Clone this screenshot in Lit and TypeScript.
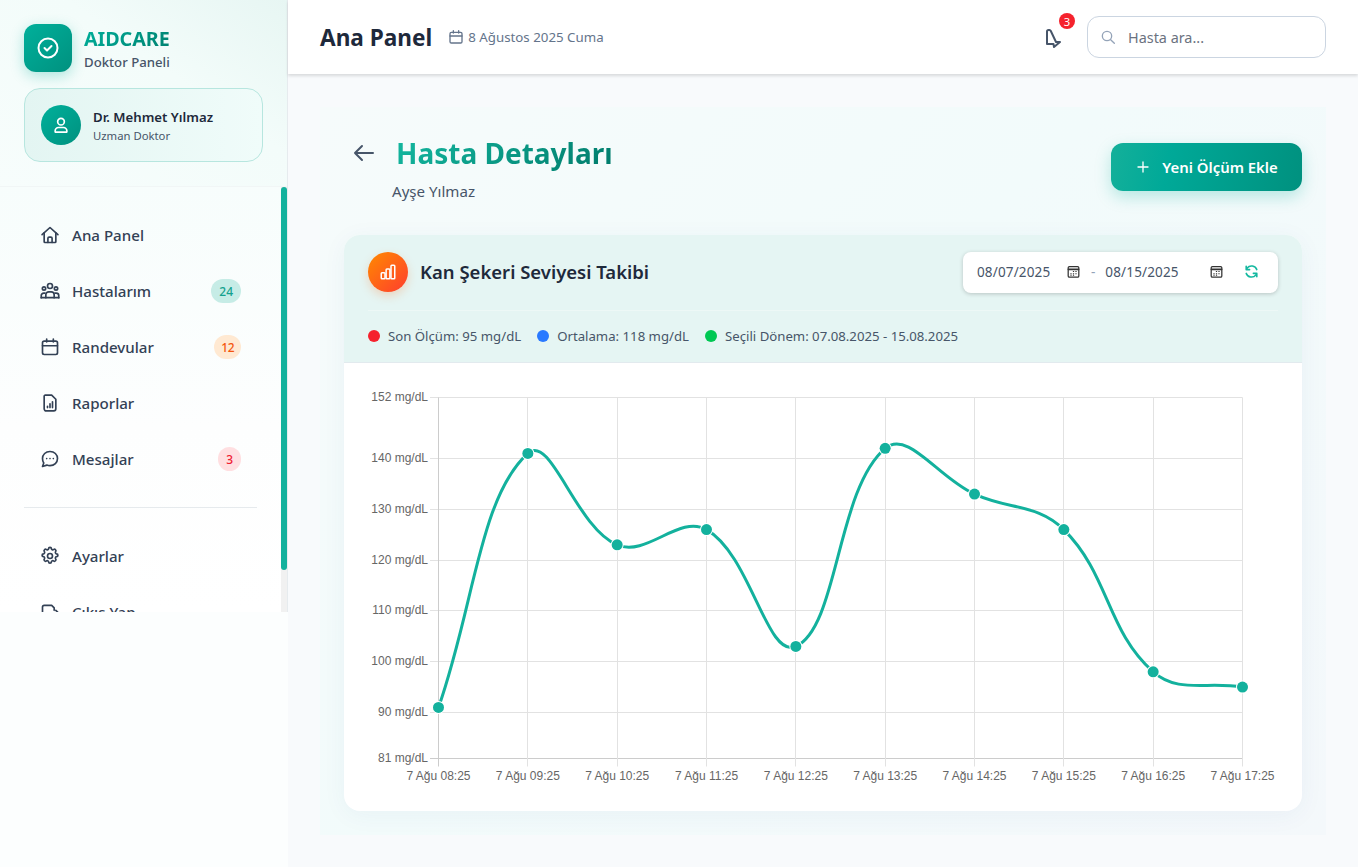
import { LitElement, html, css, svg } from "lit";
import { customElement } from "lit/decorators.js";

const vals = [91, 141, 123, 126, 103, 142, 133, 126, 98, 95];
const labels = ["08:25","09:25","10:25","11:25","12:25","13:25","14:25","15:25","16:25","17:25"];
const L = 94.5, R = 898.5, T = 34.5, B = 395.5; // chart area inside the svg
const xs = vals.map((_, i) => L + (i * (R - L)) / 9);
const yOf = (v: number) => 349.5 - (v - 90) * 5.08;
const ys = vals.map(yOf);

function spline(): string {
  const t = 0.4;
  const pts = xs.map((x, i) => ({ x, y: ys[i] }));
  const cp = pts.map((p, i) => {
    const a = pts[Math.max(0, i - 1)], b = pts[Math.min(pts.length - 1, i + 1)];
    const d1 = Math.hypot(p.x - a.x, p.y - a.y), d2 = Math.hypot(b.x - p.x, b.y - p.y);
    const tot = d1 + d2 || 1;
    const fa = (t * d1) / tot, fb = (t * d2) / tot;
    return {
      px: p.x - fa * (b.x - a.x), py: Math.max(T, Math.min(B, p.y - fa * (b.y - a.y))),
      nx: p.x + fb * (b.x - a.x), ny: Math.max(T, Math.min(B, p.y + fb * (b.y - a.y))),
    };
  });
  let d = `M${pts[0].x} ${pts[0].y}`;
  for (let i = 1; i < pts.length; i++) {
    d += ` C${cp[i - 1].nx.toFixed(2)} ${cp[i - 1].ny.toFixed(2)} ${cp[i].px.toFixed(2)} ${cp[i].py.toFixed(2)} ${pts[i].x.toFixed(2)} ${pts[i].y.toFixed(2)}`;
  }
  return d;
}

const ic = (body: unknown, size = 18, sw = 2) => html`<svg width=${size} height=${size} viewBox="0 0 24 24" fill="none" stroke="currentColor" stroke-width=${sw} stroke-linecap="round" stroke-linejoin="round">${body}</svg>`;

const icons = {
  home: svg`<path d="M2.500 11.500 12 3l9.500 8.500"/><path d="M5 9.500V20a1 1 0 0 0 1 1h12a1 1 0 0 0 1-1V9.500"/><path d="M9.500 21v-5a1.500 1.500 0 0 1 1.500-1.500h2a1.500 1.500 0 0 1 1.500 1.500v5"/>`,
  users: svg`<circle cx="12" cy="6" r="3"/><circle cx="4.800" cy="9" r="2"/><circle cx="19.200" cy="9" r="2"/><path d="M7 20v-3.500a3.500 3.500 0 0 1 3.500-3.500h3a3.500 3.500 0 0 1 3.500 3.500V20"/><path d="M1.500 20v-2.500A3 3 0 0 1 4.500 14.500H6"/><path d="M22.500 20v-2.500a3 3 0 0 0-3-3H18"/><path d="M1.500 20h21"/>`,
  cal: svg`<rect x="3" y="5" width="18" height="16" rx="2"/><path d="M8 2.500V6M16 2.500V6M3 10.500h18"/>`,
  report: svg`<path d="M6 2.500h8l5 5V19a2.500 2.500 0 0 1-2.500 2.500h-9A2.500 2.500 0 0 1 5 19V3.500"/><path d="M9 17.500v-1.500M12 17.500v-4.500M15 17.500v-7"/>`,
  msg: svg`<path d="M12 3c5.200 0 9 3.600 9 8.500S17.200 20 12 20c-1.400 0-2.700-.2-3.800-.7L3 21l1.500-4.200C3.500 15.300 3 13.500 3 11.500 3 6.600 6.800 3 12 3Z"/><path d="M8 11.500h.01M12 11.500h.01M16 11.500h.01"/>`,
  gear: svg`<circle cx="12" cy="12" r="3"/><path d="M10.300 3.300a1.700 1.700 0 0 1 3.400 0 1.700 1.700 0 0 0 2.600 1.100 1.700 1.700 0 0 1 2.400 2.400 1.700 1.700 0 0 0 1.100 2.600 1.700 1.700 0 0 1 0 3.400 1.700 1.700 0 0 0-1.100 2.600 1.700 1.700 0 0 1-2.400 2.400 1.700 1.700 0 0 0-2.600 1.100 1.700 1.700 0 0 1-3.400 0 1.700 1.700 0 0 0-2.600-1.100 1.700 1.700 0 0 1-2.400-2.400 1.700 1.700 0 0 0-1.100-2.600 1.700 1.700 0 0 1 0-3.400 1.700 1.700 0 0 0 1.100-2.600 1.700 1.700 0 0 1 2.400-2.400 1.700 1.700 0 0 0 2.600-1.100Z"/>`,
  logout: svg`<path d="M3 20V6a2 2 0 0 1 2-2h9l3 3v3"/><path d="M3 20h10M14 13h8M19 10l3 3-3 3"/>`,
  nativeCal: svg`<rect x="3.500" y="4" width="17" height="17" rx="2" stroke-width="2"/><path d="M4 8.500h16" stroke-width="3"/><path d="M11 12h2M15 12h2M7 15.500h2M11 15.500h2M15 15.500h2M7 18h2M11 18h2" stroke-width="1.800" stroke-linecap="butt"/>`,
};

@customElement("app-root")
export class AppRoot extends LitElement {
  static styles = css`
    :host { display: block; width: 1358px; height: 867px; overflow: hidden; background: #f8fafc;
      font-family: "Noto Sans", sans-serif; color: #1e293b; }
    .page { display: flex; height: 867px; }
    .side { width: 288px; flex: none; height: 867px; background: #fcfefe; display: flex; flex-direction: column; }
    .side-in { height: 612px; flex: none; display: flex; flex-direction: column; border-right: 1px solid #e6ebee;
      background: linear-gradient(180deg, #f7fdfc 30%, #fdfefe 70%, #ffffff 100%); box-sizing: border-box; }
    .brand-wrap { height: 187px; flex: none; box-sizing: border-box; padding: 24px 24px 0; border-bottom: 1px solid #f1f6f6;
      background: linear-gradient(35deg, #f7fdfc 0%, #f3fcfa 60%, #e7f6f3 100%); }
    .brand { display: flex; gap: 12px; align-items: center; }
    .logo { width: 48px; height: 48px; border-radius: 12px; background: linear-gradient(135deg, #00b09b, #00917f);
      display: flex; align-items: center; justify-content: center; color: #fff; box-shadow: 0 4px 14px rgba(0,176,155,.3); }
    .bt { font-size: 19.800px; font-weight: 700; line-height: 28px; letter-spacing: -.1px;
      background: linear-gradient(135deg, #00b09b, #00806f); -webkit-background-clip: text; background-clip: text; color: transparent; }
    .bs { font-size: 13.200px; font-weight: 500; color: #475569; line-height: 18px; }
    .user { margin-top: 16px; width: 239px; height: 74px; box-sizing: border-box; border: 1px solid #b7e6df; border-radius: 16px;
      background: linear-gradient(90deg, #e3f5f2, #f0fcfa); display: flex; align-items: center; gap: 12px; padding: 0 16px; }
    .avatar { width: 40px; height: 40px; border-radius: 50%; background: linear-gradient(135deg, #00b09b, #00917f); color: #fff;
      display: flex; align-items: center; justify-content: center; }
    .un { font-size: 13.200px; font-weight: 600; color: #1e293b; line-height: 19px; padding-top: 1px; }
    .ur { font-size: 11.300px; color: #475569; line-height: 16px; margin-top: 1px; }
    .nav-wrap { flex: 1; min-height: 0; display: flex; overflow: hidden; }
    .nav { flex: 1; min-width: 0; overflow: hidden; padding: 20px 24px 0 24px; box-sizing: border-box; }
    .track { width: 6px; flex: none; background: #f1f1f1; margin-right: 0; position: relative; }
    .thumb { width: 6px; height: 383px; border-radius: 3px; background: #13b19d; }
    .item { display: flex; align-items: center; height: 56px; padding: 0 16px 0 16px; margin-right: -6px; gap: 12px; color: #334155;
      font-size: 15.100px; font-weight: 500; box-sizing: border-box; width: 233px; }
    .item svg { flex: none; }
    .item .t { flex: 1; }
    .pill { height: 24px; border-radius: 12px; font-size: 12px; font-weight: 500; padding: 0 8px; display: flex; align-items: center; justify-content: center; }
    .p1 { background: #c6ece6; color: #14a18e; }
    .p2 { background: #ffe9d2; color: #f4560e; padding: 0 7px; letter-spacing: -.5px; }
    .p3 { background: #ffdfe1; color: #f01c33; }
    .sep { height: 1px; background: #e6eaed; margin: 20px 0 20px; width: 233px; }
    .main { flex: 1; min-width: 0; display: flex; flex-direction: column; }
    .top { height: 74px; flex: none; background: #fff; box-shadow: 0 2px 3px rgba(0,0,0,.13); display: flex; align-items: center;
      padding: 0 32px; position: relative; box-sizing: border-box; }
    .title { font-size: 22.600px; font-weight: 700; color: #1e293b; letter-spacing: 0; }
    .date { display: flex; align-items: center; gap: 4px; margin-left: 16px; font-size: 13.300px; color: #64748b; }
    .date svg { color: #64748b; }
    .spacer { flex: 1; }
    .bell { position: relative; width: 40px; height: 40px; margin-right: 15px; }
    .bell svg { position: absolute; left: 12px; top: 10px; }
    .dot { position: absolute; left: 27px; top: -4px; width: 16px; height: 16px; border-radius: 50%; background: #f5222d; color: #fff;
      font-size: 11.200px; display: flex; align-items: center; justify-content: center; }
    .search { width: 239px; height: 42px; border: 1px solid #cbd5e1; border-radius: 12px; box-sizing: border-box; display: flex; align-items: center;
      padding-left: 12px; gap: 12px; color: #94a3b8; font-size: 14.400px; background: #fff; }
    .search span { color: #6b7280; }
    .body { flex: 1; min-height: 0; padding: 33px 32px 32px; box-sizing: border-box; }
    .panel { height: 728px; border-radius: 0; box-sizing: border-box; padding: 24px;
      background: linear-gradient(135deg, #f6fbfb 0%, #f2fbfb 45%, #f4f8fb 100%); display: flex; flex-direction: column; }
    .head { display: flex; justify-content: space-between; align-items: flex-start; height: 104px; flex: none; }
    .hl { display: flex; flex-direction: column; padding-top: 2px; }
    .hrow { display: flex; align-items: center; gap: 20px; margin-left: 8px; height: 40px; color: #475569; }
    .h1 { font-size: 28px; font-weight: 700; line-height: 40px;
      background: linear-gradient(135deg, #14b8a0, #007a6a); -webkit-background-clip: text; background-clip: text; color: transparent; }
    .hsub { font-size: 15.100px; color: #475569; margin: 8px 0 0 48px; line-height: 20px; }
    .btn { width: 191px; height: 48px; border-radius: 12px; margin-top: 12px; background: linear-gradient(100deg, #14b09a 0%, #00a998 30%, #00917f 100%);
      color: #fff; font-size: 14.900px; font-weight: 600; display: flex; align-items: center; justify-content: center; gap: 11px;
      box-shadow: 0 6px 16px rgba(0,176,155,.25); }
    .card { flex: 1; min-height: 0; border-radius: 16px; background: #fff; box-shadow: 0 4px 24px rgba(30,70,130,.05); overflow: hidden; display: flex; flex-direction: column; }
    .chead { height: 128px; flex: none; box-sizing: border-box; background: #e5f5f3; border-bottom: 1px solid #e2eaee; padding: 17px 24px 0; }
    .crow { display: flex; justify-content: space-between; align-items: flex-start; height: 58px; border-bottom: 1px solid #edf8f6; }
    .cl { display: flex; align-items: center; gap: 12px; }
    .ci { width: 40px; height: 40px; border-radius: 50%; background: linear-gradient(135deg, #ff8a00, #ff3d2e); color: #fff; display: flex; align-items: center; justify-content: center;
      box-shadow: 0 4px 10px rgba(255,120,40,.25); }
    .ct { font-size: 18.500px; font-weight: 600; color: #1e293b; margin-top: -1px; }
    .dates { width: 315px; height: 41px; border-radius: 8px; background: #fff; box-shadow: 0 1px 4px rgba(0,0,0,.2); display: flex; align-items: center; box-sizing: border-box;
      padding: 0 0 2px 14px; font-size: 13.500px; color: #475569; }
    .d1 { width: 76px; letter-spacing: .15px; }
    .nc { color: #333; display: flex; margin-left: 13px; }
    .nc2 { margin-left: 28px; }
    .dash { color: #94a3b8; margin: 0 10px 0 10px; }
    .rf { color: #14b8a0; display: flex; margin-left: 20px; }
    .legend { display: flex; gap: 16px; font-size: 13.200px; color: #475569; margin-top: 16px; align-items: center; }
    .li { display: flex; align-items: center; gap: 8px; }
    .ld { width: 12px; height: 12px; border-radius: 50%; }
    svg.chart { display: block; flex: none; }
    .tick { font-family: "Liberation Sans", Arial, sans-serif; font-size: 12px; fill: #666; }
  `;

  private nav(icon: unknown, t: string, pill?: string, cls = "") {
    return html`<div class="item">${ic(icon, 20, 2)}<span class="t">${t}</span>${pill ? html`<span class="pill ${cls}">${pill}</span>` : ""}</div>`;
  }

  private chart() {
    const yt: [string, number][] = [["152", 34.5],["140", 95.5],["130", 146.5],["120", 197.5],["110", 247.5],["100", 298.5],["90", 349.5],["81", 395.5]];
    return svg`<svg class="chart" width="958" height="448" viewBox="0 0 958 448">
      ${yt.map(([t, y]) => svg`<line x1="86" x2=${R} y1=${y} y2=${y} stroke=${t === "81" ? "#ccc" : "#e2e2e2"}/>
        <text class="tick" x="84" y=${y - 1} text-anchor="end" dominant-baseline="central">${t} mg/dL</text>`)}
      ${xs.map((x, i) => svg`<line x1=${Math.round(x - .5) + .5} x2=${Math.round(x - .5) + .5} y1=${T} y2=${B + 8} stroke=${i === 0 ? "#ccc" : "#e2e2e2"}/>
        <text class="tick" x=${x} y=${B + 21.5} text-anchor="middle">7 Ağu ${labels[i]}</text>`)}
      <path d=${spline()} fill="none" stroke="#13b19d" stroke-width="3"/>
      ${xs.map((x, i) => svg`<circle cx=${x} cy=${ys[i]} r="5.500" fill="#13b19d" stroke="#fff" stroke-width="2" paint-order="stroke"/>`)}
    </svg>`;
  }

  render() {
    return html`<div class="page">
      <aside class="side"><div class="side-in">
        <div class="brand-wrap">
          <div class="brand">
            <div class="logo">${ic(svg`<circle cx="12" cy="12" r="9.500"/><path d="m8.500 12 2.500 2.500 4.500-4.500"/>`, 24, 2)}</div>
            <div><div class="bt">AIDCARE</div><div class="bs">Doktor Paneli</div></div>
          </div>
          <div class="user">
            <div class="avatar">${ic(svg`<circle cx="12" cy="8" r="4"/><path d="M5 20.500v-1.500a4 4 0 0 1 4-4h6a4 4 0 0 1 4 4v1.500Z"/>`, 20, 2)}</div>
            <div><div class="un">Dr. Mehmet Yılmaz</div><div class="ur">Uzman Doktor</div></div>
          </div>
        </div>
        <div class="nav-wrap">
          <div class="nav">
            ${this.nav(icons.home, "Ana Panel")}
            ${this.nav(icons.users, "Hastalarım", "24", "p1")}
            ${this.nav(icons.cal, "Randevular", "12", "p2")}
            ${this.nav(icons.report, "Raporlar")}
            ${this.nav(icons.msg, "Mesajlar", "3", "p3")}
            <div class="sep"></div>
            ${this.nav(icons.gear, "Ayarlar")}
            ${this.nav(icons.logout, "Çıkış Yap")}
          </div>
          <div class="track"><div class="thumb"></div></div>
        </div>
      </div></aside>
      <div class="main">
        <header class="top">
          <div class="title">Ana Panel</div>
          <div class="date">${ic(icons.cal, 16, 2)}<span>8 Ağustos 2025 Cuma</span></div>
          <div class="spacer"></div>
          <div class="bell">
            <svg width="20" height="22" viewBox="0 0 20 22" fill="none" stroke="#475569" stroke-width="2" stroke-linecap="round" stroke-linejoin="round"><path d="M3 17V4.500Q3 3 4.500 3H5.500Q6.300 3 6.800 4L12 15H16L10 20L9.500 17Z"/></svg>
            <span class="dot">3</span>
          </div>
          <div class="search">${ic(svg`<circle cx="10.500" cy="10.500" r="7"/><path d="m16 16 5.500 5.500"/>`, 16, 2)}<span>Hasta ara...</span></div>
        </header>
        <div class="body"><div class="panel">
          <div class="head">
            <div class="hl">
              <div class="hrow">${ic(svg`<path d="M21 12H3M10 5l-7 7 7 7"/>`, 24, 2)}<span class="h1">Hasta Detayları</span></div>
              <div class="hsub">Ayşe Yılmaz</div>
            </div>
            <div class="btn">${ic(svg`<path d="M12 4.500v15M4.500 12h15"/>`, 16, 2)}<span>Yeni Ölçüm Ekle</span></div>
          </div>
          <section class="card">
            <div class="chead">
              <div class="crow">
                <div class="cl">
                  <div class="ci">${ic(svg`<rect x="3" y="13" width="5" height="8" rx="1"/><rect x="9.500" y="8" width="5" height="13" rx="1"/><rect x="16" y="3" width="5" height="18" rx="1"/>`, 18, 2)}</div>
                  <div class="ct">Kan Şekeri Seviyesi Takibi</div>
                </div>
                <div class="dates">
                  <span class="d1">08/07/2025</span><span class="nc">${ic(icons.nativeCal, 15, 1)}</span>
                  <span class="dash">-</span>
                  <span class="d1">08/15/2025</span><span class="nc nc2">${ic(icons.nativeCal, 15, 1)}</span>
                  <span class="rf">${ic(svg`<path d="M20.500 9A9 9 0 0 0 5 6.500L3.500 9M3.500 3.500V9H9"/><path d="M3.500 15A9 9 0 0 0 19 17.500l1.500-2.500M20.500 20.500V15H15"/>`, 15, 2.5)}</span>
                </div>
              </div>
              <div class="legend">
                <div class="li"><span class="ld" style="background:#f5222d"></span>Son Ölçüm: 95 mg/dL</div>
                <div class="li"><span class="ld" style="background:#2979ff"></span>Ortalama: 118 mg/dL</div>
                <div class="li"><span class="ld" style="background:#00c853"></span>Seçili Dönem: 07.08.2025 - 15.08.2025</div>
              </div>
            </div>
            ${this.chart()}
          </section>
        </div></div>
      </div>
    </div>`;
  }
}
